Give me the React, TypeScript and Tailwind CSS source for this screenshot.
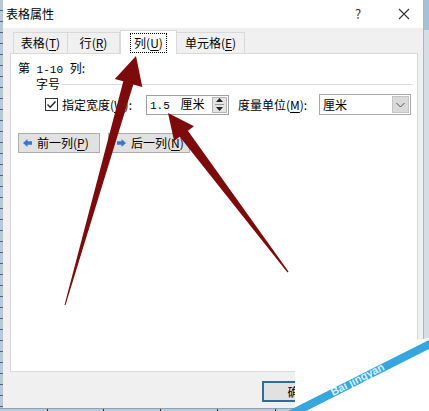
import React from 'react';

const leftTicks = Array.from({ length: 37 });
const bottomTicks = [47, 103, 160, 217, 275];

function Mn({ children }: { children: React.ReactNode }) {
  return <span className="underline underline-offset-2">{children}</span>;
}

// half-width latin text, as in the bitmap dialog font
function Hw({ children }: { children: React.ReactNode }) {
  return <span className="font-['Liberation_Mono',monospace] text-[11px]">{children}</span>;
}

const tabs = [
  { label: '表格', key: 'T', w: 'w-[55px]' },
  { label: '行', key: 'R', w: 'w-[53px]' },
  { label: '列', key: 'U', w: 'w-[57px]', active: true },
  { label: '单元格', key: 'E', w: 'w-[69px]' },
];

function CheckBox() {
  return (
    <svg width="13" height="13" viewBox="0 0 13 13">
      <rect x="0.5" y="0.5" width="12" height="12" fill="#fff" stroke="#333" />
      <path d="M2.5 6.5 L5.2 9.2 L10.5 3.5" fill="none" stroke="#222" strokeWidth="1.4" />
    </svg>
  );
}

function NavArrow({ dir }: { dir: 'left' | 'right' }) {
  const d = dir === 'left' ? 'M0 4 L4.5 0 L4.5 2.2 L9 2.2 L9 5.8 L4.5 5.8 L4.5 8 Z' : 'M9 4 L4.5 0 L4.5 2.2 L0 2.2 L0 5.8 L4.5 5.8 L4.5 8 Z';
  return (
    <svg width="9" height="8" viewBox="0 0 9 8">
      <path d={d} fill="#3b78c8" />
    </svg>
  );
}

export default function App() {
  return (
    <div className="relative w-[429px] h-[411px] overflow-hidden bg-[#c9d5e0] text-[12px] leading-[16px] text-black font-['Noto_Sans_CJK_SC',sans-serif]">
      <div className="flex h-[408px]">
        {/* spreadsheet edge on the left */}
        <div className="w-[3px] flex flex-col bg-[#b8c8d7]">
          {leftTicks.map((_, i) => (
            <div key={i} className="h-[11px] shrink-0 border-b border-[#4d6377]" />
          ))}
        </div>

        {/* dialog */}
        <div className="w-[420px] flex flex-col bg-[#f0f0f0]">
          {/* title bar */}
          <div className="h-[28px] flex items-center bg-white pl-[3px]">
            <span className="text-[12px]">表格属性</span>
            <div className="ml-auto flex items-center">
              <span className="w-[30px] text-center text-[13px] text-[#333]">?</span>
              <div className="w-[12px]" />
              <div className="w-[38px] flex justify-center">
                <svg width="12" height="12" viewBox="0 0 12 12">
                  <path d="M1 1 L11 11 M11 1 L1 11" stroke="#333" strokeWidth="1.1" />
                </svg>
              </div>
            </div>
          </div>

          <div className="flex-1 flex flex-col pl-[7px] pr-[5px] pt-[1px]">
            {/* tabs */}
            <div className="h-[24px] flex items-end pl-[3px]">
              {tabs.map((t) =>
                t.active ? (
                  <div key={t.key} className={`${t.w} h-[24px] -mb-px relative z-10 bg-white border border-b-0 border-[#d9d9d9] flex items-center justify-center`}>
                    <span className="px-[3px] py-px border border-dotted border-black">
                      {t.label}(<Mn>{t.key}</Mn>)
                    </span>
                  </div>
                ) : (
                  <div key={t.key} className={`${t.w} h-[21px] bg-[#f0f0f0] border border-b-0 border-[#d9d9d9] -ml-px first:ml-0 flex items-center justify-center`}>
                    <span>
                      {t.label}(<Mn>{t.key}</Mn>)
                    </span>
                  </div>
                )
              )}
            </div>

            {/* panel */}
            <div className="h-[319px] bg-white border border-[#d9d9d9] pl-[7px] pr-[4px] pt-[6px] flex flex-col">
              <div className="h-[16px]">
                第<Hw> 1-10 </Hw>列:
              </div>
              <div className="h-[16px] flex items-center">
                <span className="ml-[18px]">字号</span>
                <div className="flex-1 h-px bg-[#dcdcdc] ml-[2px]" />
              </div>

              <div className="mt-[2px] h-[21px] flex items-center">
                <div className="ml-[27px] flex items-center">
                  <CheckBox />
                </div>
                <span className="ml-[4px] w-[84px]">
                  指定宽度(<Mn>W</Mn>):
                </span>
                <div className="w-[83px] h-[20px] border border-[#a0a0a0] flex items-center pl-[3px] pr-[1px]">
                  <span className="flex-1">
                    <Hw>1.5 </Hw>
                    <span className="ml-[4px]">厘米</span>
                  </span>
                  <div className="w-[15px] h-[16px] bg-[#e4e4e4] border border-[#b5b5b5] flex flex-col items-center justify-center gap-[2px]">
                    <svg width="7" height="4" viewBox="0 0 7 4">
                      <path d="M0 4 L3.5 0 L7 4 Z" fill="#222" />
                    </svg>
                    <div className="w-[9px] h-px bg-[#999]" />
                    <svg width="7" height="4" viewBox="0 0 7 4">
                      <path d="M0 0 L7 0 L3.5 4 Z" fill="#222" />
                    </svg>
                  </div>
                </div>
                <span className="ml-[9px] w-[81px]">
                  度量单位(<Mn>M</Mn>):
                </span>
                <div className="w-[92px] h-[21px] border border-[#a9a9a9] flex items-center pl-[3px] pr-px">
                  <span className="flex-1">厘米</span>
                  <div className="w-[17px] h-[17px] bg-[#dadada] border border-[#c4c4c4] flex items-center justify-center">
                    <svg width="9" height="6" viewBox="0 0 9 6">
                      <path d="M0.5 1 L4.5 5 L8.5 1" fill="none" stroke="#555" strokeWidth="1" />
                    </svg>
                  </div>
                </div>
              </div>

              <div className="mt-[18px] flex gap-[8px]">
                <div className="w-[82px] h-[20px] bg-[#e1e1e1] border border-[#adadad] flex items-center pl-[4px] gap-[5px]">
                  <NavArrow dir="left" />
                  <span>
                    前一列(<Mn>P</Mn>)
                  </span>
                </div>
                <div className="w-[82px] h-[20px] bg-[#e1e1e1] border border-[#adadad] flex items-center pl-[8px] gap-[5px]">
                  <NavArrow dir="right" />
                  <span>
                    后一列(<Mn>N</Mn>)
                  </span>
                </div>
              </div>
            </div>

            {/* footer */}
            <div className="flex-1 flex items-start pt-[9px]">
              <div className="ml-[252px] w-[75px] h-[21px] bg-[#e1e1e1] border-2 border-[#2f6d99] flex items-center justify-center">
                确定
              </div>
            </div>
          </div>
        </div>

        {/* spreadsheet edge on the right */}
        <div className="w-[6px] flex flex-col border-l border-[#a9b8c6] bg-[#d6dde4]">
          <div className="h-[30px] bg-[#a9bfd3]" />
        </div>
      </div>

      {/* bottom spreadsheet edge */}
      <div className="relative h-[3px] bg-[#bccbd8] border-t border-[#8fa3b6]">
        {bottomTicks.map((x) => (
          <div key={x} className="absolute top-0 h-[3px] w-px bg-[#333]" style={{ left: x }} />
        ))}
      </div>

      {/* annotation arrows and watermark drawn over the screenshot */}
      <svg className="absolute inset-0 pointer-events-none" width="429" height="411" viewBox="0 0 429 411">
        <polygon
          points="65.5,305 64.5,305 123.3,81.3 114.8,79 136,56 142.3,87 133.3,84.4"
          fill="#7c0b0b"
        />
        <polygon
          points="288.5,271.5 287.5,272.5 179.7,136.8 174.1,141 168,113 194,126.2 187.9,130.8"
          fill="#7c0b0b"
        />
        <polygon points="295,361 417,361 417,340 429,338 429,411 295,411" fill="#ffffff" />
        <polygon points="288,411 429,340 429,349 306,411" fill="#36a6de" />
        <text x="333" y="396" transform="rotate(-27 333 396)" fill="#ffffff" fillOpacity="0.85" fontSize="11" fontWeight="bold" fontFamily="'Liberation Sans', sans-serif">
          Bai jingyan
        </text>
      </svg>
    </div>
  );
}
